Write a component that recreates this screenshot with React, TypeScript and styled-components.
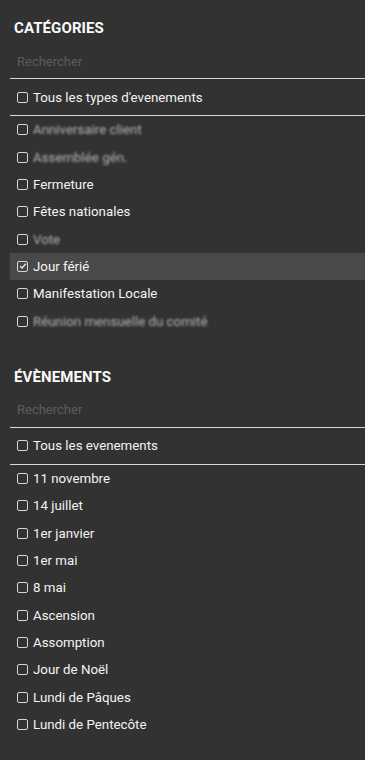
import React from 'react'
import styled, { createGlobalStyle } from 'styled-components'

const GlobalStyle = createGlobalStyle`
  html, body {
    margin: 0;
    padding: 0;
    background: #323232;
  }
  body {
    font-family: Roboto, "Liberation Sans", sans-serif;
  }
`;

const Panel = styled.div`
  width: 365px;
  min-height: 760px;
  background: #323232;
  color: #f4f4f4;
`;

// 섹션

const Section = styled.section`
  padding: 18px 0 14px 10px;
`;

const SectionTitle = styled.h2`
  margin: 0 0 0 4px;
  height: 20px;
  line-height: 20px;
  font-size: 15px;
  font-weight: 700;
  color: #fafafa;
  letter-spacing: 0.1px;
`;

const SearchInput = styled.input`
  display: block;
  box-sizing: border-box;
  margin-top: 6px;
  width: 100%;
  height: 35px;
  padding: 0 0 0 7px;
  border: none;
  border-bottom: 1px solid #d8d8d8;
  background: transparent;
  color: #eee;
  font-family: Roboto, "Liberation Sans", sans-serif;
  font-size: 13px;
  outline: none;

  &::placeholder {
    color: #5c5c5c;
  }
`;

const AllRow = styled.label`
  display: flex;
  align-items: center;
  gap: 5px;
  height: 36px;
  padding-left: 7px;
  border-bottom: 1px solid #d8d8d8;
  font-size: 13.3px;
  cursor: pointer;
`;

const List = styled.ul`
  margin: 0;
  padding: 0;
  list-style: none;
`;

const Item = styled.li<{ $active?: boolean }>`
  display: flex;
  align-items: center;
  gap: 5px;
  height: 27.35px;
  padding-left: 7px;
  font-size: 13.3px;
  background: ${p => (p.$active ? '#494949' : 'transparent')};
`;

const Box = styled.span`
  box-sizing: border-box;
  flex-shrink: 0;
  display: flex;
  align-items: center;
  justify-content: center;
  width: 11px;
  height: 11px;
  border: 1.5px solid #d6d6d6;
  border-radius: 2px;
`;

const Blurred = styled.span`
  white-space: nowrap;
  color: #b4b4b4;
  filter: blur(1.3px);
`;

function Check({ checked }: { checked?: boolean }) {
  return (
    <Box>
      {checked && (
        <svg width="8" height="8" viewBox="0 0 8 8">
          <path d="M1.2 4.2 L3.1 6 L6.8 1.8" fill="none" stroke="#e6e6e6" strokeWidth="1.4" />
        </svg>
      )}
    </Box>
  );
}

type Entry = { label: string; blur?: boolean; checked?: boolean };

const categories: Entry[] = [
  { label: 'Anniversaire client', blur: true },
  { label: 'Assemblée gén.', blur: true },
  { label: 'Fermeture' },
  { label: 'Fêtes nationales' },
  { label: 'Vote', blur: true },
  { label: 'Jour férié', checked: true },
  { label: 'Manifestation Locale' },
  { label: 'Réunion mensuelle du comité', blur: true },
];

const events: Entry[] = [
  { label: '11 novembre' },
  { label: '14 juillet' },
  { label: '1er janvier' },
  { label: '1er mai' },
  { label: '8 mai' },
  { label: 'Ascension' },
  { label: 'Assomption' },
  { label: 'Jour de Noël' },
  { label: 'Lundi de Pâques' },
  { label: 'Lundi de Pentecôte' },
];

function FilterSection({ title, allLabel, entries }: { title: string; allLabel: string; entries: Entry[] }) {
  return (
    <Section>
      <SectionTitle>{title}</SectionTitle>
      <SearchInput placeholder="Rechercher" />
      <AllRow>
        <Check />
        {allLabel}
      </AllRow>
      <List>
        {entries.map(e => (
          <Item key={e.label} $active={e.checked}>
            <Check checked={e.checked} />
            {e.blur ? <Blurred>{e.label}</Blurred> : e.label}
          </Item>
        ))}
      </List>
    </Section>
  );
}

export default function App() {
  return (
    <>
      <GlobalStyle />
      <Panel>
        <FilterSection title="CATÉGORIES" allLabel="Tous les types d'evenements" entries={categories} />
        <FilterSection title="ÉVÈNEMENTS" allLabel="Tous les evenements" entries={events} />
      </Panel>
    </>
  );
}
